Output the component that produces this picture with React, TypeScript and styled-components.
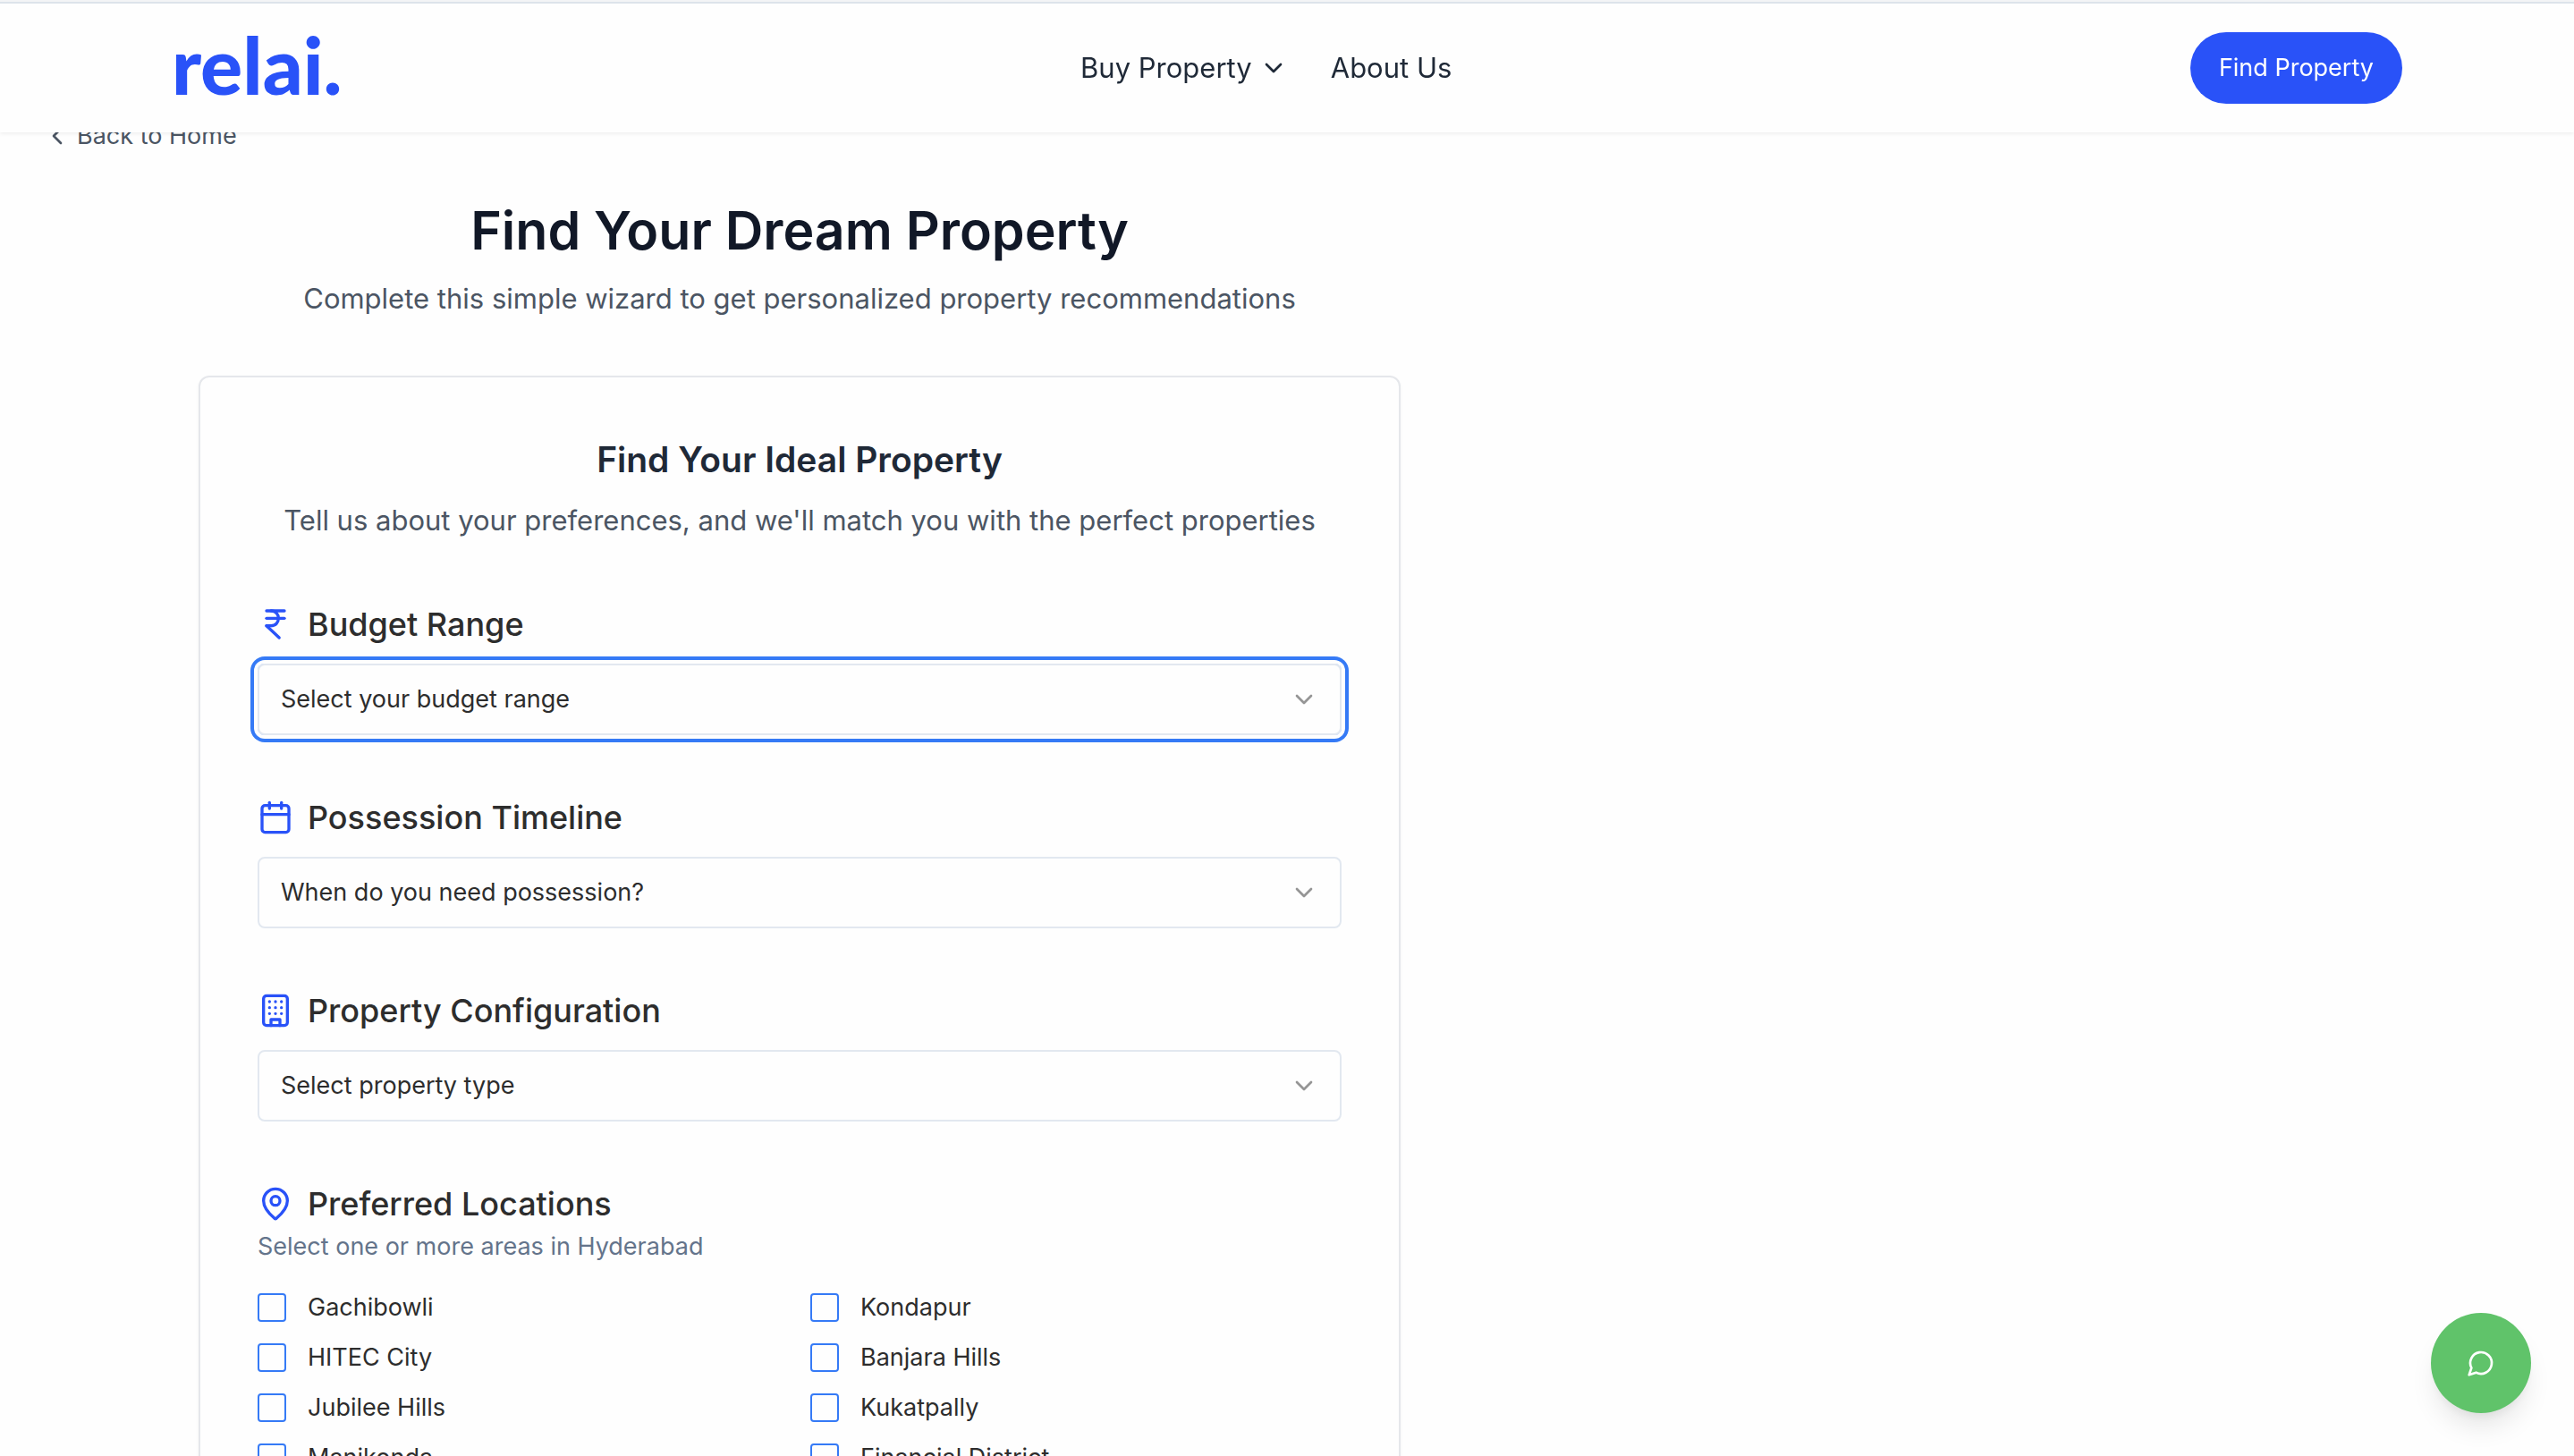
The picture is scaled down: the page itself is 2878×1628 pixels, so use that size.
import React from 'react';
import styled, { createGlobalStyle } from 'styled-components';
import { Calendar, ChevronDown, ChevronLeft, IndianRupee, MapPin } from 'lucide-react';

const color = {
  brand: '#2952f8',
  ring: '#357af6',
  ink: '#111827',
  heading: '#1f2937',
  body: '#2d2d2d',
  muted: '#4b5563',
  hint: '#64748b',
  line: '#e2e8f0',
};

const GlobalStyle = createGlobalStyle`
  *, *::before, *::after { box-sizing: border-box; }
  body {
    margin: 0;
    background: #fefefe;
    color: ${color.body};
    font-family: Inter, "Liberation Sans", sans-serif;
    font-size: 27px;
    line-height: 40px;
  }
  h1, h2, p, fieldset { margin: 0; padding: 0; border: 0; min-width: 0; }
  button, select, input { font: inherit; }
  a { color: inherit; text-decoration: none; }
  svg { display: block; flex: none; }
`;

const Page = styled.div`
  height: 100vh;
  overflow: hidden;
`;

const Header = styled.header`
  position: fixed;
  inset: 0 0 auto;
  z-index: 10;
  display: flex;
  align-items: center;
  justify-content: space-between;
  height: 148px;
  padding: 4px 192px 0;
  background: #fefefe;
  background-image: linear-gradient(#f3f4f6 2px, #dde3ea 2px, #dde3ea 4px, transparent 4px);
  box-shadow: 0 2px 4px rgba(0, 0, 0, 0.06);
`;

const Logo = styled.a`
  padding-bottom: 8px;
  color: ${color.brand};
  font-family: Lato, sans-serif;
  font-size: 88px;
  font-weight: 900;
  line-height: 96px;
`;

const Nav = styled.nav`
  display: flex;
  align-items: center;
  gap: 48px;
  color: ${color.heading};
  font-size: 31px;
`;

const MenuButton = styled.button`
  display: flex;
  align-items: center;
  gap: 8px;
  padding: 0;
  border: 0;
  background: none;
  color: inherit;
`;

const PrimaryLink = styled.a`
  padding: 20px 32px;
  border-radius: 40px;
  background: ${color.brand};
  color: #fff;
`;

const Main = styled.main`
  max-width: 1788px;
  padding: 132px 48px 64px;
`;

const BackLink = styled.a`
  display: flex;
  align-items: center;
  gap: 6px;
  width: fit-content;
  color: ${color.muted};
`;

const Intro = styled.section`
  padding: 50px 0 62px;
  text-align: center;
`;

const PageTitle = styled.h1`
  color: ${color.ink};
  font-size: 59px;
  font-weight: 600;
  line-height: 72px;
`;

const Lead = styled.p`
  color: ${color.muted};
  font-size: 31px;
  line-height: 48px;
  margin-top: 16px;
`;

const Card = styled.form`
  display: flex;
  flex-direction: column;
  gap: 64px;
  max-width: 1344px;
  margin: 0 auto;
  padding: 64px;
  border: 2px solid #e5e7eb;
  border-radius: 12px;
  box-shadow: 0 2px 4px rgba(0, 0, 0, 0.04);
`;

const CardHead = styled.div`
  text-align: center;
`;

const CardTitle = styled.h2`
  color: ${color.heading};
  font-size: 39px;
  font-weight: 600;
  line-height: 56px;
`;

const Field = styled.div`
  display: flex;
  flex-direction: column;
  gap: 16px;
`;

const FieldLabel = styled.label`
  display: flex;
  align-items: center;
  gap: 16px;
  font-size: 36px;
  font-weight: 500;
  line-height: 56px;

  svg { color: ${color.brand}; }
`;

const SelectBox = styled.div<{ $focused?: boolean }>`
  display: grid;
  align-items: center;
  border: 2px solid ${color.line};
  border-radius: 8px;
  box-shadow: ${(p) => (p.$focused ? `0 0 0 4px #fefefe, 0 0 0 8px ${color.ring}` : 'none')};

  > * { grid-area: 1 / 1; }
  svg {
    justify-self: end;
    margin-right: 24px;
    color: #959595;
    pointer-events: none;
  }
`;

const Select = styled.select`
  appearance: none;
  width: 100%;
  height: 76px;
  padding: 0 64px 0 24px;
  border: 0;
  outline: 0;
  background: transparent;
  color: inherit;
`;

const Hint = styled.p`
  color: ${color.hint};
`;

const OptionGrid = styled.div`
  display: grid;
  grid-template-columns: 1fr 1fr;
  gap: 24px;
  padding-top: 32px;
`;

const Option = styled.label`
  display: flex;
  align-items: center;
  gap: 24px;
  line-height: 32px;
`;

const Checkbox = styled.input`
  appearance: none;
  width: 32px;
  height: 32px;
  margin: 0;
  border: 2px solid ${color.ring};
  border-radius: 4px;

  &:checked { background: ${color.ring}; }
`;

const ChatButton = styled.button`
  position: fixed;
  right: 48px;
  bottom: 48px;
  display: grid;
  place-items: center;
  width: 112px;
  height: 112px;
  border: 0;
  border-radius: 50%;
  background: #60c36a;
  color: #fff;
  box-shadow: 0 20px 30px -6px rgba(0, 0, 0, 0.1), 0 8px 12px -4px rgba(0, 0, 0, 0.06);
`;

const BuildingIcon = () => (
  <svg width="40" height="40" viewBox="0 0 24 24" fill="none" stroke="currentColor" strokeWidth="2" strokeLinecap="round" strokeLinejoin="round" aria-hidden="true">
    <rect x="4" y="2" width="16" height="20" rx="2" />
    <path d="M9 22v-4h6v4M8 6h.01M16 6h.01M12 6h.01M12 10h.01M12 14h.01M16 10h.01M16 14h.01M8 10h.01M8 14h.01" />
  </svg>
);

const dropdowns = [
  { id: 'budget', label: 'Budget Range', prompt: 'Select your budget range', icon: <IndianRupee size={40} />, focused: true },
  { id: 'possession', label: 'Possession Timeline', prompt: 'When do you need possession?', icon: <Calendar size={40} /> },
  { id: 'configuration', label: 'Property Configuration', prompt: 'Select property type', icon: <BuildingIcon /> },
];

const locations = [
  'Gachibowli',
  'Kondapur',
  'HITEC City',
  'Banjara Hills',
  'Jubilee Hills',
  'Kukatpally',
  'Manikonda',
  'Financial District',
];

export default function App() {
  return (
    <>
      <GlobalStyle />
      <Page>
        <Header>
          <Logo href="#">relai.</Logo>
          <Nav>
            <MenuButton type="button">
              Buy Property
              <ChevronDown size={32} />
            </MenuButton>
            <a href="#about">About Us</a>
          </Nav>
          <PrimaryLink href="#find">Find Property</PrimaryLink>
        </Header>
        <Main>
          <BackLink href="#home">
            <ChevronLeft size={32} />
            Back to Home
          </BackLink>
          <Intro>
            <PageTitle>Find Your Dream Property</PageTitle>
            <Lead>Complete this simple wizard to get personalized property recommendations</Lead>
          </Intro>
          <Card>
            <CardHead>
              <CardTitle>Find Your Ideal Property</CardTitle>
              <Lead>Tell us about your preferences, and we'll match you with the perfect properties</Lead>
            </CardHead>
            {dropdowns.map(({ id, label, prompt, icon, focused }) => (
              <Field key={id}>
                <FieldLabel htmlFor={id}>
                  {icon}
                  {label}
                </FieldLabel>
                <SelectBox $focused={focused}>
                  <Select id={id}>
                    <option>{prompt}</option>
                  </Select>
                  <ChevronDown size={32} />
                </SelectBox>
              </Field>
            ))}
            <fieldset aria-labelledby="locations">
              <FieldLabel as="div" id="locations">
                <MapPin size={40} />
                Preferred Locations
              </FieldLabel>
              <Hint>Select one or more areas in Hyderabad</Hint>
              <OptionGrid>
                {locations.map((name) => (
                  <Option key={name}>
                    <Checkbox type="checkbox" name="locations" value={name} />
                    {name}
                  </Option>
                ))}
              </OptionGrid>
            </fieldset>
          </Card>
        </Main>
        <ChatButton type="button" aria-label="Open chat">
          <svg width="32" height="32" viewBox="0 0 24 24" fill="none" stroke="currentColor" strokeWidth="2" strokeLinecap="round" strokeLinejoin="round">
            <path d="M7.9 20A9 9 0 1 0 4 16.1L2 22Z" />
          </svg>
        </ChatButton>
      </Page>
    </>
  );
}
